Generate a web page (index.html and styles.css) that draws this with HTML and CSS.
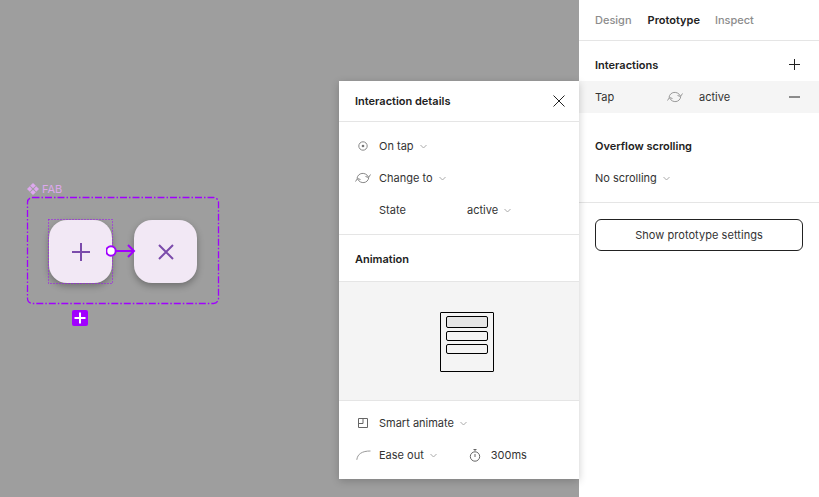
FILE: index.html
```html
<!DOCTYPE html>
<html lang="en">
<head>
    <meta charset="UTF-8">
    <title>Prototype</title>
    <link rel="stylesheet" href="styles.css">
</head>
<body>
    <div class="app">
        <div class="canvas">
            <div class="frame-label">
                <svg width="12" height="12" viewBox="0 0 12 12"><path fill="#dda8ee" d="M6 0 8.800 2.800 6 5.200 3.200 2.800ZM2.800 3.200 5.200 6 2.800 8.800 0 6ZM9.200 3.200 12 6 9.200 8.800 6.800 6ZM6 6.800 8.800 9.200 6 12 3.200 9.200Z"/></svg>
                <span>FAB</span>
            </div>
            <svg class="frame-line" width="194" height="109" viewBox="0 0 194 109"><rect x="1.500" y="1.500" width="191" height="106" rx="5" fill="none" stroke="#a100ff" stroke-width="1.300" stroke-dasharray="7 2 1.500 2"/></svg>
            <div class="fab fab-plus">
                <svg width="20" height="20" viewBox="0 0 20 20"><path d="M10 1v18M1 10h18" stroke="#7b4bab" stroke-width="2" fill="none"/></svg>
            </div>
            <div class="fab fab-close">
                <svg width="18" height="18" viewBox="0 0 18 18"><path d="M2 2l14 14M16 2 2 16" stroke="#7b4bab" stroke-width="2" fill="none"/></svg>
            </div>
            <svg class="hotspot" width="65" height="65" viewBox="0 0 65 65"><rect x=".5" y=".5" width="64" height="64" fill="none" stroke="#a100ff" stroke-dasharray="1 2"/></svg>
            <svg class="connector" width="30" height="16" viewBox="0 0 30 16"><path d="M5 8h23M22 2l6 6-6 6" stroke="#a100ff" stroke-width="2" fill="none"/><circle cx="5" cy="8" r="4.700" fill="#fff" stroke="#a100ff" stroke-width="2"/></svg>
            <div class="add-badge">
                <svg width="12" height="12" viewBox="0 0 12 12"><path d="M6 .5v11M.5 6h11" stroke="#fff" stroke-width="2" fill="none"/></svg>
            </div>
        </div>

        <div class="popup">
            <div class="popup-head">
                <span class="title">Interaction details</span>
                <svg width="12" height="12" viewBox="0 0 12 12"><path d="M.5.5l11 11M11.500.5l-11 11" stroke="#222" stroke-width="1" fill="none"/></svg>
            </div>
            <div class="popup-section">
                <div class="row">
                    <span class="row-icon"><svg width="10" height="10" viewBox="0 0 10 10"><circle cx="5" cy="5" r="4.200" fill="none" stroke="#888"/><circle cx="5" cy="5" r="1.300" fill="#777"/></svg></span>
                    <span>On tap</span>
                    <svg class="caret" width="7" height="5" viewBox="0 0 7 5"><path d="M.5 1 3.500 4 6.500 1" fill="none" stroke="#aaa"/></svg>
                </div>
                <div class="row">
                    <span class="row-icon"><svg width="16" height="14" viewBox="0 0 16 14"><path d="M2 7.500C2.800 1.500 10.500.5 13.500 6M13.800 6.500C13 12.500 5.500 13.500 2.500 8M15.500 3.500 13.500 6.500 10.500 5.500M.5 10.500 2.500 7.500 5.500 8.500" fill="none" stroke="#888"/></svg></span>
                    <span>Change to</span>
                    <svg class="caret" width="7" height="5" viewBox="0 0 7 5"><path d="M.5 1 3.500 4 6.500 1" fill="none" stroke="#aaa"/></svg>
                </div>
                <div class="row state-row">
                    <span class="state-label">State</span>
                    <span>active</span>
                    <svg class="caret" width="7" height="5" viewBox="0 0 7 5"><path d="M.5 1 3.500 4 6.500 1" fill="none" stroke="#aaa"/></svg>
                </div>
            </div>
            <div class="popup-head anim-head">
                <span class="title">Animation</span>
            </div>
            <div class="preview">
                <div class="phone">
                    <div class="phone-bar first"></div>
                    <div class="phone-bar"></div>
                    <div class="phone-bar"></div>
                </div>
            </div>
            <div class="popup-foot">
                <div class="row">
                    <span class="row-icon"><svg width="10" height="10" viewBox="0 0 10 10"><path d="M.5.5h9v9h-9zM.5 5.500h4.500V.5" fill="none" stroke="#666"/></svg></span>
                    <span>Smart animate</span>
                    <svg class="caret" width="7" height="5" viewBox="0 0 7 5"><path d="M.5 1 3.500 4 6.500 1" fill="none" stroke="#aaa"/></svg>
                </div>
                <div class="row">
                    <span class="row-icon"><svg width="15" height="10" viewBox="0 0 15 10"><path d="M.8 9.800C1.500 4 6 1 14.500 1" fill="none" stroke="#999"/></svg></span>
                    <span>Ease out</span>
                    <svg class="caret" width="7" height="5" viewBox="0 0 7 5"><path d="M.5 1 3.500 4 6.500 1" fill="none" stroke="#aaa"/></svg>
                    <svg class="timer" width="12" height="13" viewBox="0 0 12 13"><circle cx="6" cy="7.500" r="4.700" fill="none" stroke="#666"/><path d="M6 .5v1.500M4.500.5h3M6 5v3" fill="none" stroke="#666"/></svg>
                    <span>300ms</span>
                </div>
            </div>
        </div>

        <aside class="panel">
            <div class="tabs">
                <span>Design</span>
                <span class="active">Prototype</span>
                <span>Inspect</span>
            </div>
            <div class="section">
                <div class="section-head">
                    <span class="title">Interactions</span>
                    <svg class="add-icon" width="11" height="11" viewBox="0 0 11 11"><path d="M5.500 0v11M0 5.500h11" stroke="#222" fill="none"/></svg>
                </div>
                <div class="interaction">
                    <span class="tap">Tap</span>
                    <svg class="swap" width="16" height="14" viewBox="0 0 16 14"><path d="M2 7.500C2.800 1.500 10.500.5 13.500 6M13.800 6.500C13 12.500 5.500 13.500 2.500 8M15.500 3.500 13.500 6.500 10.500 5.500M.5 10.500 2.500 7.500 5.500 8.500" fill="none" stroke="#999"/></svg>
                    <span class="target">active</span>
                    <svg width="11" height="2" viewBox="0 0 11 2"><path d="M0 1h11" stroke="#222"/></svg>
                </div>
            </div>
            <div class="section overflow">
                <div class="section-head">
                    <span class="title">Overflow scrolling</span>
                </div>
                <div class="row scroll-row">
                    <span>No scrolling</span>
                    <svg class="caret" width="7" height="5" viewBox="0 0 7 5"><path d="M.5 1 3.500 4 6.500 1" fill="none" stroke="#aaa"/></svg>
                </div>
            </div>
            <div class="button-wrap">
                <button type="button">Show prototype settings</button>
            </div>
        </aside>
    </div>
</body>
</html>
```

FILE: styles.css
```css
body{
    margin: 0;
    padding: 0;
    font-family: "Inter", "Liberation Sans", sans-serif;
    font-size: 11px;
    color: #333;
}
.app{
    display: flex;
    width: 819px;
    height: 497px;
    overflow: hidden;
    position: relative;
}
.canvas{
    width: 579px;
    background-color: #9e9e9e;
    position: relative;
    flex-shrink: 0;
}
.frame-label{
    position: absolute;
    left: 27px;
    top: 182px;
    display: flex;
    align-items: center;
    gap: 3px;
    color: #dda8ee;
    font-weight: 400;
}
.frame-line{
    position: absolute;
    left: 26px;
    top: 196px;
}
.fab{
    position: absolute;
    top: 220px;
    width: 63px;
    height: 63px;
    border-radius: 18px;
    background-color: #f2e8f5;
    box-shadow: 0 3px 7px rgba(0,0,0,.3);
    display: flex;
    align-items: center;
    justify-content: center;
}
.fab-plus{
    left: 49px;
}
.fab-close{
    left: 134px;
}
.hotspot{
    position: absolute;
    left: 48px;
    top: 219px;
}
.connector{
    position: absolute;
    left: 106px;
    top: 243px;
}
.add-badge{
    position: absolute;
    left: 72px;
    top: 310px;
    width: 16px;
    height: 16px;
    border-radius: 2px;
    background-color: #a100ff;
    display: flex;
    align-items: center;
    justify-content: center;
}
.popup{
    position: absolute;
    left: 339px;
    top: 81px;
    width: 240px;
    height: 398px;
    background-color: #fff;
    box-shadow: 0 2px 8px rgba(0,0,0,.2);
    z-index: 2;
    display: flex;
    flex-direction: column;
}
.title{
    font-weight: 600;
    color: #222;
}
.popup-head{
    height: 41px;
    padding: 0 14px 0 16px;
    box-sizing: border-box;
    display: flex;
    align-items: center;
    justify-content: space-between;
    border-bottom: 1px solid #e5e5e5;
    flex-shrink: 0;
}
.popup-section{
    padding: 8px 0;
    border-bottom: 1px solid #e5e5e5;
}
.row{
    height: 32px;
    display: flex;
    align-items: center;
}
.row-icon{
    width: 40px;
    padding-left: 8px;
    box-sizing: border-box;
    display: flex;
    justify-content: center;
    flex-shrink: 0;
}
.caret{
    margin-left: 6px;
}
.state-label{
    margin-left: 40px;
    width: 88px;
}
.anim-head{
    height: 47px;
    padding-top: 2px;
}
.preview{
    height: 119px;
    padding: 2px 0 0 16px;
    box-sizing: border-box;
    background-color: #f4f4f4;
    border-bottom: 1px solid #e5e5e5;
    display: flex;
    align-items: center;
    justify-content: center;
    flex-shrink: 0;
}
.phone{
    width: 42px;
    height: 54px;
    border: 1px solid #000;
    border-radius: 1px;
    padding: 3px 5px 1px;
    display: flex;
    flex-direction: column;
    gap: 3px;
}
.phone-bar{
    height: 10px;
    border: 1px solid #000;
    border-radius: 2px;
    box-sizing: border-box;
}
.phone-bar.first{
    height: 12px;
    background-color: #e6e6e6;
}
.popup-foot{
    padding: 6px 0;
}
.timer{
    margin-left: 32px;
    margin-right: 10px;
}
.panel{
    flex: 1;
    background-color: #fff;
}
.tabs{
    height: 40px;
    padding: 0 16px;
    display: flex;
    align-items: center;
    gap: 16px;
    border-bottom: 1px solid #e5e5e5;
    color: #8c8c8c;
    font-weight: 500;
}
.tabs .active{
    color: #222;
    font-weight: 600;
    margin-right: -1px;
}
.section-head{
    height: 40px;
    padding: 8px 19px 0 16px;
    box-sizing: border-box;
    display: flex;
    align-items: center;
    justify-content: space-between;
}
.add-icon{
    margin-top: -1px;
}
.interaction{
    height: 32px;
    padding: 0 19px 0 16px;
    background-color: #f5f5f5;
    display: flex;
    align-items: center;
}
.tap{
    width: 72px;
}
.swap{
    margin-right: 16px;
}
.target{
    flex: 1;
}
.overflow{
    margin-top: 9px;
    padding-bottom: 8px;
    border-bottom: 1px solid #e5e5e5;
}
.scroll-row{
    padding-left: 16px;
}
.button-wrap{
    padding: 16px;
}
button{
    width: 208px;
    height: 32px;
    background-color: #fff;
    border: 1px solid #222;
    border-radius: 6px;
    font-family: inherit;
    font-size: 11px;
    letter-spacing: .05px;
    color: #333;
}
```
